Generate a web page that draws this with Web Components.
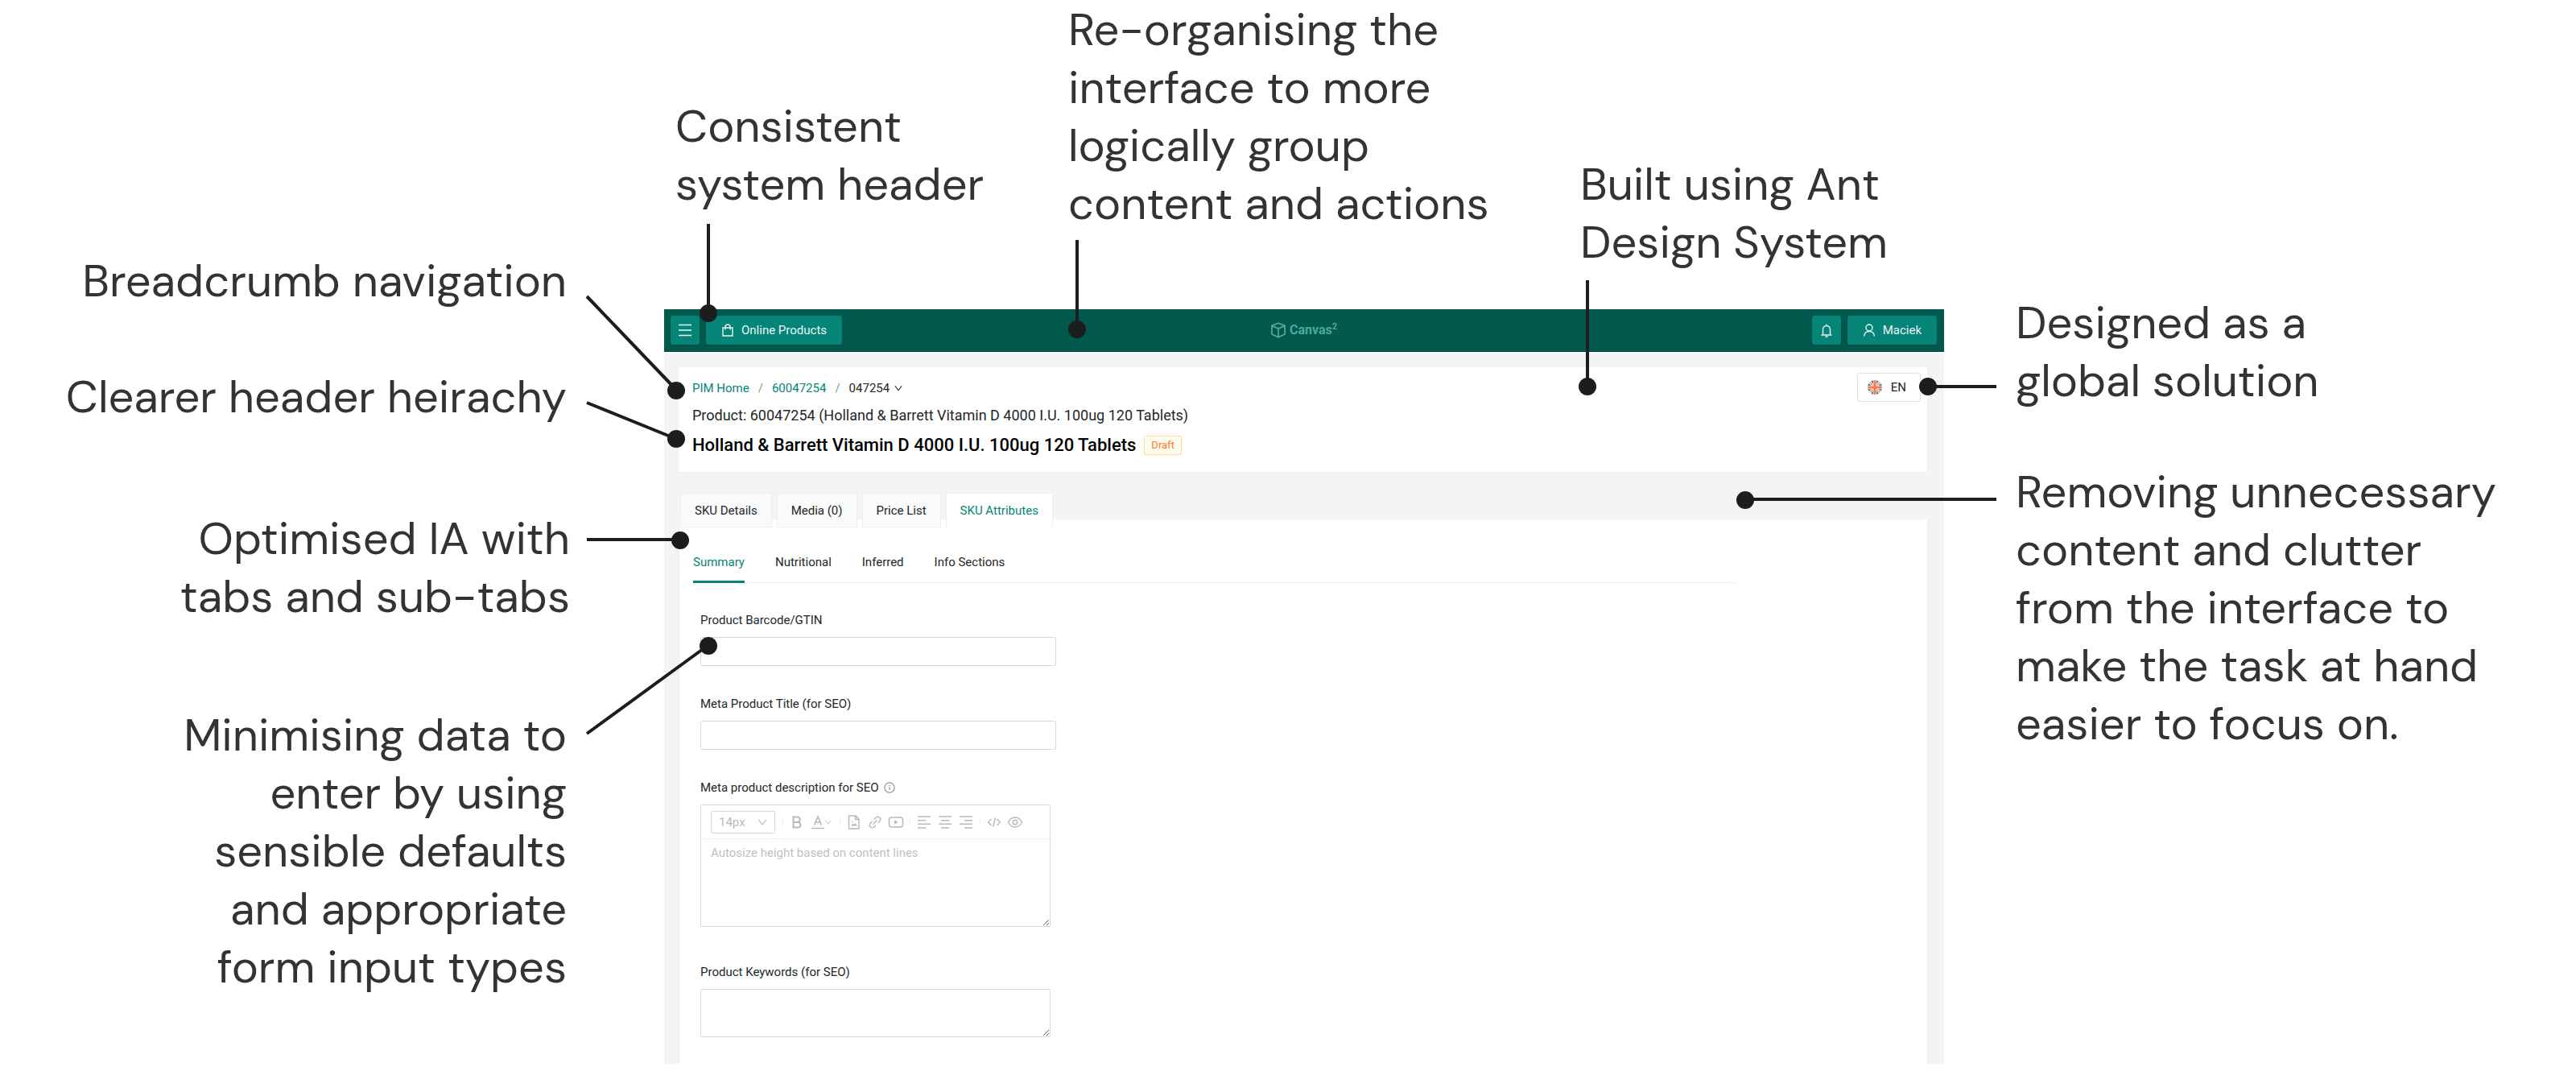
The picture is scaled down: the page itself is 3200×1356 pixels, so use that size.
<!DOCTYPE html>
<html lang="en">
<head>
<meta charset="utf-8">
<meta name="viewport" content="width=device-width, initial-scale=1">
<title>Canvas² product page, annotated</title>
<style>
    body {
        margin: 0;
        background: #fff;
        color: #222827;
        font-family: Roboto, "Liberation Sans", sans-serif;
        font-size: 15px;
        line-height: 22px;
    }
</style>
</head>
<body>
<annotated-board>
    <side-note slot="left">Breadcrumb navigation</side-note>
    <side-note slot="left">Clearer header heirachy</side-note>
    <side-note slot="left" class="tabs">Optimised IA with<br>tabs and sub-tabs</side-note>
    <side-note slot="left" class="inputs">Minimising data to<br>enter by using<br>sensible defaults<br>and appropriate<br>form input types</side-note>

    <side-note slot="top" class="header">Consistent<br>system header</side-note>
    <side-note slot="top">Re-organising the<br>interface to more<br>logically group<br>content and actions</side-note>
    <side-note slot="top" class="system">Built using Ant<br>Design System</side-note>

    <product-app></product-app>

    <side-note slot="right">Designed as a<br>global solution</side-note>
    <side-note slot="right">Removing unnecessary<br>content and clutter<br>from the interface to<br>make the task at hand<br>easier to focus on.</side-note>
</annotated-board>

<script>
const ICONS = {
    menu: '<path d="M0 1.500h16M0 8h16M0 14.500h16"/>',
    bag: '<path d="M2 5h12v10H2zM5 7.500V4a3 3 0 0 1 6 0v3.500"/>',
    cube: '<path d="M8 1l6.500 2.500v8.500L8 15l-6.500-3V3.500zM1.500 3.500L8 6.500l6.500-3M8 6.500V15"/>',
    bell: '<path d="M1.500 14h13M3.500 14V7a4.500 4.500 0 0 1 9 0v7M8 2.500V.5M6.500 16h3"/>',
    user: '<circle cx="8" cy="5" r="4"/><path d="M1.500 15.500c.4-3.500 2.600-6 6.500-6s6.100 2.500 6.500 6"/>',
    down: '<path d="M2.500 4.500L8 11.500l5.500-7"/>',
    info: '<circle cx="8" cy="8" r="7"/><path d="M8 7v4.500M8 4.300v1.400"/>',
    bold: '<path stroke-width="2" d="M3.500 1.500h5a3.200 3.200 0 0 1 0 6.400h-5zM3.500 7.900h5.800a3.300 3.300 0 0 1 0 6.600H3.500z"/>',
    color: '<path stroke-width="1.600" d="M3.500 11.500L8 1l4.500 10.500M5 8h6"/><path stroke-width="1.500" d="M0 15.500h16"/>',
    image: '<path stroke-width="1.500" d="M1.500 0h8.500l4 4v12H1.500zM9.500 0v4.500H14"/><path fill="currentColor" stroke="none" d="M4 12.500l2.200-3 1.500 1.600L9.500 9l2.500 3.500z"/><circle cx="5.500" cy="7.500" r=".8" fill="currentColor" stroke="none"/>',
    link: '<path d="M7 4.500l2.500-2.500a3.200 3.200 0 0 1 4.500 4.500L11.500 9M9 11.500L6.500 14A3.200 3.200 0 0 1 2 9.500L4.500 7M5.500 10.500l5-5"/>',
    video: '<rect x="-.5" y="2" width="17" height="12" rx="3" stroke-width="1.500"/><path fill="currentColor" stroke="none" d="M6 5.200v5.600L10.500 8z"/>',
    left: '<path stroke-width="1.500" d="M0 1h16M0 5.700h10M0 10.300h16M0 15h10"/>',
    center: '<path stroke-width="1.500" d="M0 1h16M3 5.700h10M0 10.300h16M3 15h10"/>',
    right: '<path stroke-width="1.500" d="M0 1h16M6 5.700h10M0 10.300h16M6 15h10"/>',
    code: '<path stroke-width="1.500" d="M4.500 4L.7 8l3.800 4M11.500 4l3.800 4-3.800 4M9.500 2.500l-3 11"/>',
    eye: '<path stroke-width="1.500" d="M-.5 8C1.700 4 4.500 2 8 2s6.300 2 8.500 6c-2.200 4-5 6-8.500 6S1.700 12-.5 8z"/><circle cx="8" cy="8" r="2.800" stroke-width="1.500"/>'
};

class UiIcon extends HTMLElement {
    constructor() {
        super();
        this.shadowDOM = this.attachShadow({mode: "open"});
    }

    connectedCallback() {
        this.shadowDOM.innerHTML = `
        <style>
        :host {
            display: inline-flex;
            flex: none;
            width: 16px;
            height: 16px;
        }
        svg {
            width: 100%;
            height: 100%;
            overflow: visible;
        }
        </style>
        <svg viewBox="0 0 16 16" fill="none" stroke="currentColor" stroke-width="1.4" aria-hidden="true">${ICONS[this.getAttribute("name")]}</svg>
        `;
    }
}

class SideNote extends HTMLElement {
    constructor() {
        super();
        this.attachShadow({mode: "open"}).innerHTML = `
        <style>
        :host {
            display: block;
            color: #333;
            font-family: "DM Sans", Lato, sans-serif;
            font-size: 56px;
            line-height: 72px;
            white-space: nowrap;
        }
        </style>
        <slot></slot>
        `;
    }
}

class AnnotatedBoard extends HTMLElement {
    constructor() {
        super();
        this.attachShadow({mode: "open"}).innerHTML = `
        <style>
        :host {
            display: grid;
            grid-template-columns: 825fr 1590fr 785fr;
            align-items: start;
            position: relative;
            overflow: hidden;
            padding-bottom: 36px;
        }
        .left, .right {
            display: flex;
            flex-direction: column;
            min-width: 0;
        }
        .left {
            align-items: flex-end;
            text-align: right;
            gap: 72px;
            padding: 313px 121px 0 0;
        }
        .left ::slotted(.tabs) {
            margin: 32px -4px 0 0;
        }
        .left ::slotted(.inputs) {
            margin-top: 28px;
        }
        .right {
            gap: 66px;
            padding: 365px 0 0 89px;
        }
        .middle {
            min-width: 0;
        }
        .top {
            display: grid;
            grid-template-columns: 488fr 636fr 452fr;
            height: 384px;
            align-items: start;
            box-sizing: border-box;
            padding: 1px 0 0 14px;
        }
        .top ::slotted(.header) {
            padding-top: 120px;
        }
        .top ::slotted(.system) {
            padding-top: 192px;
        }
        /* leader lines lie over the whole board */
        .leaders {
            position: absolute;
            inset: 0;
            width: 100%;
            pointer-events: none;
        }
        </style>
        <div class="left"><slot name="left"></slot></div>
        <div class="middle">
            <div class="top"><slot name="top"></slot></div>
            <slot></slot>
        </div>
        <div class="right"><slot name="right"></slot></div>
        <svg class="leaders" viewBox="0 0 3200 1356" stroke="#1d1d1f" stroke-width="4" fill="none" aria-hidden="true">
            <path d="M880 278V389M1338 298V409M1972 348V480M729 368L840 484M729 500L840 545M729 670H845M729 911L880 801M2480 480H2394M2480 620H2168"/>
            <g fill="#1d1d1f" stroke="none">
                <circle cx="880" cy="389" r="11"/>
                <circle cx="1338" cy="409" r="11"/>
                <circle cx="1972" cy="480" r="11"/>
                <circle cx="840" cy="485" r="11"/>
                <circle cx="840" cy="545" r="11"/>
                <circle cx="845" cy="671" r="11"/>
                <circle cx="880" cy="802" r="11"/>
                <circle cx="2395" cy="480" r="11"/>
                <circle cx="2168" cy="621" r="11"/>
            </g>
        </svg>
        `;
    }
}

class SystemHeader extends HTMLElement {
    constructor() {
        super();
        this.attachShadow({mode: "open"}).innerHTML = `
        <style>
        :host {
            display: grid;
            grid-template-columns: 1fr auto 1fr;
            align-items: center;
            height: 53px;
            padding: 0 9px 0 8px;
            box-sizing: border-box;
            background: #00594c;
            border-bottom: 1px solid #00483e;
        }
        div {
            display: flex;
            gap: 8px;
        }
        .user {
            justify-content: flex-end;
        }
        button {
            display: flex;
            align-items: center;
            justify-content: center;
            gap: 9px;
            height: 36px;
            padding: 0 19px;
            border: 0;
            border-radius: 3px;
            background: #058477;
            box-shadow: 0 1px 2px rgba(0, 0, 0, .25);
            color: #e8f5f3;
            font: inherit;
        }
        .square {
            width: 36px;
            padding: 0;
        }
        .logo {
            gap: 4px;
            align-items: center;
            color: #4fa89c;
            font-size: 16px;
            font-weight: 700;
        }
        .logo ui-icon {
            width: 20px;
            height: 20px;
        }
        sup {
            font-size: 11px;
            line-height: 0;
        }
        </style>
        <div>
            <button class="square" aria-label="Menu"><ui-icon name="menu"></ui-icon></button>
            <button><ui-icon name="bag"></ui-icon>Online Products</button>
        </div>
        <div class="logo"><ui-icon name="cube"></ui-icon><span>Canvas<sup>2</sup></span></div>
        <div class="user">
            <button class="square" aria-label="Notifications"><ui-icon name="bell"></ui-icon></button>
            <button><ui-icon name="user"></ui-icon>Maciek</button>
        </div>
        `;
    }
}

class PageTitle extends HTMLElement {
    constructor() {
        super();
        this.attachShadow({mode: "open"}).innerHTML = `
        <style>
        :host {
            display: flex;
            justify-content: space-between;
            align-items: flex-start;
            padding: 7px 8px 19px 17px;
            background: #fff;
            border: 1px solid #f0f0f0;
            border-width: 0 1px 1px 0;
        }
        nav {
            display: flex;
            align-items: center;
            gap: 11px;
            padding-top: 8px;
        }
        nav i {
            color: #8b9190;
            font-style: normal;
        }
        a {
            color: #058477;
            text-decoration: none;
        }
        nav button {
            display: flex;
            align-items: center;
            gap: 5px;
            padding: 0;
            border: 0;
            background: none;
            color: inherit;
            font: inherit;
        }
        nav ui-icon {
            width: 12px;
            height: 12px;
        }
        p {
            margin: 12px 0;
            font-size: 18px;
        }
        h1 {
            display: flex;
            align-items: center;
            gap: 10px;
            margin: 0;
            color: #000;
            font-size: 22px;
            font-weight: 500;
            line-height: 28px;
        }
        .tag {
            padding: 0 8px;
            border: 1px solid #ffdd90;
            border-radius: 2px;
            background: #fffbee;
            color: #fa7d2c;
            font-size: 13px;
            font-weight: 400;
            line-height: 22px;
        }
        .lang {
            display: flex;
            align-items: center;
            gap: 11px;
            height: 36px;
            padding: 0 17px 0 12px;
            border: 1px solid #dde0df;
            border-radius: 3px;
            background: #fff;
            color: #222827;
            font: inherit;
        }
        .lang svg {
            width: 18px;
            height: 18px;
        }
        </style>
        <div>
            <nav aria-label="Breadcrumb">
                <a href="#home">PIM Home</a><i>/</i><a href="#product">60047254</a><i>/</i>
                <button>047254<ui-icon name="down"></ui-icon></button>
            </nav>
            <p>Product: 60047254 (Holland &amp; Barrett Vitamin D 4000 I.U. 100ug 120 Tablets)</p>
            <h1>Holland &amp; Barrett Vitamin D 4000 I.U. 100ug 120 Tablets <span class="tag">Draft</span></h1>
        </div>
        <button class="lang">
            <svg viewBox="0 0 18 18" aria-hidden="true">
                <clipPath id="round"><circle cx="9" cy="9" r="9"/></clipPath>
                <g clip-path="url(#round)">
                    <path fill="#fff" d="M0 0h18v18H0z"/>
                    <path fill="#1c8579" d="M3 0h4v5zM15 0h-4v5zM3 18h4v-5zM15 18h-4v-5zM0 3v4h5zM0 15v-4h5zM18 3v4h-5zM18 15v-4h-5z"/>
                    <path stroke="#f0845a" stroke-width="1.300" d="M1 1l16 16M17 1L1 17"/>
                    <path stroke="#fff" stroke-width="4.500" d="M9 0v18M0 9h18"/>
                    <path stroke="#f47c50" stroke-width="3.200" d="M9 0v18M0 9h18"/>
                </g>
            </svg>EN
        </button>
        `;
    }
}

class TabBar extends HTMLElement {
    constructor() {
        super();
        this.shadowDOM = this.attachShadow({mode: "open"});
    }

    connectedCallback() {
        const active = this.getAttribute("active");
        const tabs = this.getAttribute("tabs").split(",").map(tab =>
            `<button role="tab" aria-selected="${tab === active}">${tab}</button>`).join("");
        this.shadowDOM.innerHTML = `
        <style>
        :host {
            display: flex;
            gap: 6px;
        }
        button {
            height: 43px;
            padding: 0 17px;
            border: 1px solid #efefef;
            background: #fafafa;
            color: inherit;
            font: inherit;
        }
        button[aria-selected=true] {
            border-bottom-color: #fff;
            background: #fff;
            color: #058477;
        }
        :host([type=line]) {
            gap: 38px;
            border-bottom: 1px solid #f0f0f0;
        }
        :host([type=line]) button {
            height: 46px;
            margin-bottom: -1px;
            padding: 0 0 4px;
            border: 0;
            border-bottom: 3px solid transparent;
            background: none;
        }
        :host([type=line]) button[aria-selected=true] {
            border-color: #058477;
        }
        </style>
        ${tabs}
        `;
        this.setAttribute("role", "tablist");
    }
}

class FormField extends HTMLElement {
    constructor() {
        super();
        this.shadowDOM = this.attachShadow({mode: "open"});
    }

    connectedCallback() {
        const type = this.getAttribute("type");
        let control = '<input id="field" type="text">';
        if (type === "textarea") {
            control = '<textarea id="field"></textarea>';
        }
        if (type === "editor") {
            control = `
            <div class="editor">
                <div class="toolbar">
                    <span class="size"><select aria-label="Font size"><option>14px</option></select><ui-icon name="down"></ui-icon></span>
                    <hr>
                    <button aria-label="Bold"><ui-icon name="bold"></ui-icon></button>
                    <button class="color" aria-label="Text colour"><ui-icon name="color"></ui-icon><ui-icon class="small" name="down"></ui-icon></button>
                    <hr>
                    <button aria-label="Image"><ui-icon name="image"></ui-icon></button>
                    <button aria-label="Link"><ui-icon name="link"></ui-icon></button>
                    <button aria-label="Video"><ui-icon name="video"></ui-icon></button>
                    <hr>
                    <button aria-label="Align left"><ui-icon name="left"></ui-icon></button>
                    <button aria-label="Align centre"><ui-icon name="center"></ui-icon></button>
                    <button aria-label="Align right"><ui-icon name="right"></ui-icon></button>
                    <hr>
                    <button aria-label="Code"><ui-icon name="code"></ui-icon></button>
                    <button aria-label="Preview"><ui-icon name="eye"></ui-icon></button>
                </div>
                <textarea id="field" placeholder="Autosize height based on content lines"></textarea>
            </div>`;
        }
        this.shadowDOM.innerHTML = `
        <style>
        :host {
            display: block;
            width: 442px;
            max-width: 100%;
        }
        :host([type=editor]), :host([type=textarea]) {
            width: 435px;
        }
        :host([type=editor]) {
            padding-bottom: 9px;
        }
        .label {
            display: flex;
            align-items: center;
            gap: 6px;
            margin-bottom: 10px;
        }
        .label ui-icon {
            width: 14px;
            height: 14px;
            color: #8b9695;
        }
        input, textarea, .editor {
            display: block;
            box-sizing: border-box;
            width: 100%;
            margin: 0;
            border: 1px solid #d6dad9;
            border-radius: 2px;
            background: #fff;
            font: inherit;
        }
        input {
            height: 36px;
        }
        textarea {
            height: 60px;
        }
        .editor {
            height: 152px;
            display: flex;
            flex-direction: column;
        }
        .editor textarea {
            flex: 1;
            padding: 6px 12px;
            border: 0;
        }
        .editor textarea::placeholder {
            color: #bcc2c1;
        }
        .toolbar {
            display: flex;
            align-items: center;
            gap: 10px;
            height: 42px;
            box-sizing: border-box;
            margin: 0 1px;
            padding: 0 11px;
            border-bottom: 1px solid #f0f0f0;
            color: #b4bbba;
        }
        .size {
            display: grid;
            grid-template-columns: 1fr auto;
            align-items: center;
            box-sizing: border-box;
            width: 80px;
            height: 28px;
            padding: 0 8px 0 9px;
            border: 1px solid #d6dad9;
            border-radius: 2px;
        }
        .size ui-icon {
            width: 14px;
            height: 14px;
        }
        select {
            appearance: none;
            min-width: 0;
            padding: 0;
            border: 0;
            background: none;
            color: inherit;
            font: inherit;
        }
        hr {
            width: 1px;
            height: 12px;
            margin: 0 -1px;
            border: 0;
            background: #f0f0f0;
        }
        .toolbar button {
            display: flex;
            align-items: center;
            padding: 0;
            border: 0;
            background: none;
            color: inherit;
        }
        .toolbar .small {
            width: 10px;
            height: 10px;
        }
        </style>
        <div class="label">
            <label for="field">${this.getAttribute("label")}</label>
            ${type === "editor" ? '<ui-icon name="info"></ui-icon>' : ""}
        </div>
        ${control}
        `;
    }
}

class ProductApp extends HTMLElement {
    constructor() {
        super();
        this.attachShadow({mode: "open"}).innerHTML = `
        <style>
        :host {
            display: block;
            background: #f3f4f6;
        }
        system-header {
            box-shadow: 0 2px #fff;
        }
        main {
            padding: 19px 20px 0 18px;
        }
        .tabs {
            margin: 25px 0 -10px 2px;
            position: relative;
        }
        .panel {
            padding: 33px 17px;
            background: #fff;
            border: 1px solid #ebecec;
            border-width: 0 1px;
        }
        .sub {
            max-width: 1296px;
        }
        form {
            display: flex;
            flex-direction: column;
            gap: 36px;
            margin: 35px 0 0 9px;
        }
        </style>
        <system-header></system-header>
        <main>
            <page-title></page-title>
            <tab-bar class="tabs" tabs="SKU Details,Media (0),Price List,SKU Attributes" active="SKU Attributes"></tab-bar>
            <div class="panel">
                <tab-bar class="sub" type="line" tabs="Summary,Nutritional,Inferred,Info Sections" active="Summary"></tab-bar>
                <form>
                    <form-field label="Product Barcode/GTIN"></form-field>
                    <form-field label="Meta Product Title (for SEO)"></form-field>
                    <form-field type="editor" label="Meta product description for SEO"></form-field>
                    <form-field type="textarea" label="Product Keywords (for SEO)"></form-field>
                </form>
            </div>
        </main>
        `;
    }
}

customElements.define("ui-icon", UiIcon);
customElements.define("side-note", SideNote);
customElements.define("annotated-board", AnnotatedBoard);
customElements.define("system-header", SystemHeader);
customElements.define("page-title", PageTitle);
customElements.define("tab-bar", TabBar);
customElements.define("form-field", FormField);
customElements.define("product-app", ProductApp);
</script>
</body>
</html>
